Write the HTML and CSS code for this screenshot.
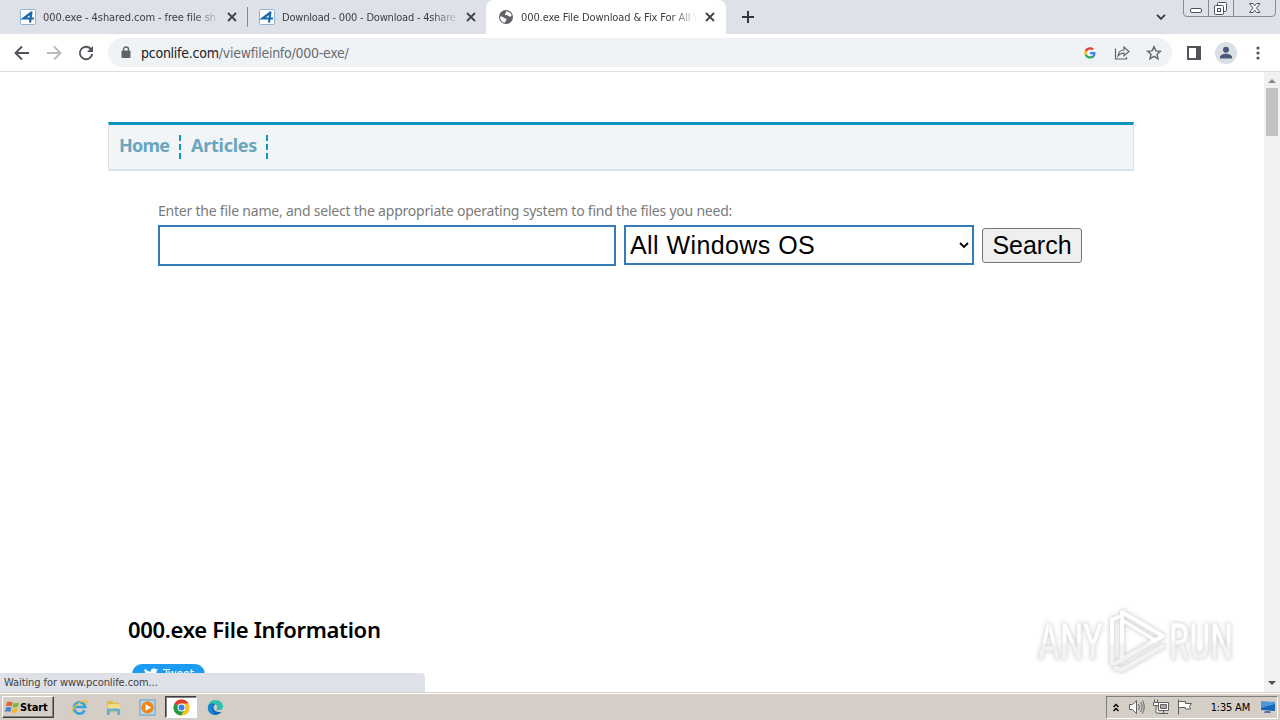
FILE: index.html
```html
<!DOCTYPE html>
<html lang="en">
<head>
  <meta charset="UTF-8" />
  <title>000.exe File Download &amp; Fix For All Windows OS</title>
  <link rel="stylesheet" href="styles.css">
</head>
<body>

  <!-- tabs -->
  <div class="tab-strip">
    <div class="tab first">
      <svg class="favicon" viewBox="0 0 16 16"><rect x=".5" y=".5" width="15" height="15" rx="1" fill="#fff" stroke="#8fb4d0"/><path d="M11.500 2.500L10 13.500M11.500 3.500L3.500 9.500H14" fill="none" stroke="#1c68ac" stroke-width="2.200"/></svg>
      <span class="tab-title t1">000.exe - 4shared.com - free file sh</span>
      <svg class="close" viewBox="0 0 10 10"><path d="M1 1l8 8M9 1L1 9"/></svg>
    </div>
    <div class="tab second">
      <svg class="favicon" viewBox="0 0 16 16"><rect x=".5" y=".5" width="15" height="15" rx="1" fill="#fff" stroke="#8fb4d0"/><path d="M11.500 2.500L10 13.500M11.500 3.500L3.500 9.500H14" fill="none" stroke="#1c68ac" stroke-width="2.200"/></svg>
      <span class="tab-title t2">Download - 000 - Download - 4share</span>
      <svg class="close" viewBox="0 0 10 10"><path d="M1 1l8 8M9 1L1 9"/></svg>
    </div>
    <div class="tab active">
      <svg class="favicon" viewBox="0 0 16 16"><circle cx="8" cy="8" r="7" fill="#5f6368"/><path d="M2 7.500c2 0 3 .3 4 1.300s2.500.2 2.500 1.600-1.500 1.200-1.500 3.400c-3-.3-5-3-5-6.300zM8 2.300c3 0 5.200 2 5.700 4.500-1.300 1.500-2.700.8-3.500 0S7 7 7 5.300 9 4 8 2.300z" fill="#fff"/></svg>
      <span class="tab-title t3">000.exe File Download &amp; Fix For All \</span>
      <svg class="close" viewBox="0 0 10 10"><path d="M1 1l8 8M9 1L1 9"/></svg>
    </div>
    <svg class="new-tab" viewBox="0 0 12 12"><path d="M6 0v12M0 6h12"/></svg>
    <svg class="tab-search" viewBox="0 0 10 6"><path d="M1 .8l4 4 4-4"/></svg>
    <div class="window-buttons">
      <svg viewBox="0 0 93 18" fill="none" stroke="#4d5261">
        <path d="M.5 0v13q0 3.500 3.500 3.500h85q3.500 0 3.500-3.500V0M25.500 0v16.500M50.500 0v16.500" stroke="#868a97"/>
        <rect x="7.500" y="8.500" width="11" height="4" rx="1.500" fill="#fff"/>
        <rect x="34.500" y="2.500" width="9" height="9" rx="1" fill="#fff"/><rect x="31.500" y="5.500" width="9" height="9" rx="1" fill="#fff"/><rect x="34.500" y="8.500" width="3" height="3"/>
        <path d="M66.500 3.500h3.500l1.700 2.300L73.500 3.500H77L73.500 8 77 12.500h-3.500l-1.800-2.300-1.700 2.300h-3.500L70 8z" fill="#fff"/>
      </svg>
    </div>
  </div>

  <!-- toolbar -->
  <div class="toolbar">
    <svg class="nav-icon back" viewBox="0 0 16 16"><path d="M15 8H2M8 1.500L1.500 8 8 14.500"/></svg>
    <svg class="nav-icon forward" viewBox="0 0 16 16"><path d="M1 8h13M8 1.500L14.500 8 8 14.500"/></svg>
    <svg class="nav-icon reload" viewBox="0 0 16 16"><path d="M13.200 4.500A6.200 6.200 0 1 0 14.200 9"/><path d="M15 1v6H9z" fill="#50545a" stroke="none"/></svg>
    <div class="address">
      <svg class="lock" viewBox="0 0 10 13"><path d="M2.500 5V3.500a2.500 2.500 0 0 1 5 0V5" fill="none" stroke="#5f6368" stroke-width="1.400"/><rect x=".5" y="4.500" width="9" height="7.500" rx="1" fill="#5f6368"/></svg>
      <span class="url"><b>pconlife.com</b>/viewfileinfo/000-exe/</span>
      <svg class="google" viewBox="0 0 48 48"><path fill="#4285f4" d="M46 24.500c0-1.600-.1-3-.4-4.500H24v9h12.400c-.5 3-2.200 5.200-4.700 6.800v5.900h7.500C43.600 37.600 46 31.600 46 24.500z"/><path fill="#34a853" d="M24 46c6.200 0 11.400-2 15.200-5.500l-7.500-5.800c-2 1.400-4.700 2.200-7.700 2.200-6 0-11-4-12.800-9.400H3.500v6C7.300 41 15 46 24 46z"/><path fill="#fbbc05" d="M11.200 27.500c-1-2.700-1-6 0-8.500V13H3.500c-3.300 6.600-3.300 14 0 20.500z"/><path fill="#ea4335" d="M24 9.600c3.300 0 6.300 1.200 8.700 3.400l6.600-6.600C35.200 2.500 29.900.5 24 .5 15 .5 7.300 5.500 3.500 13l7.700 6C13 13.600 18 9.600 24 9.600z"/></svg>
      <svg class="share" viewBox="0 0 16 16"><path d="M1.500 3.500v10.500h11V12M4 11c.5-4 3-6 6-6V2l5 4.500-5 4.300V8C7.500 8 5.500 9 4 11z"/></svg>
      <svg class="star" viewBox="0 0 16 16"><path d="M8 1.700l1.900 4.200 4.500.4-3.400 3 1 4.500L8 11.400l-4 2.400 1-4.500-3.400-3 4.500-.4z"/></svg>
    </div>
    <svg class="panel" viewBox="0 0 14 14"><path d="M1 1h12v12H1z" fill="none" stroke="#50545a" stroke-width="2"/><path d="M9 1h4v12H9z" fill="#50545a"/></svg>
    <svg class="avatar" viewBox="0 0 22 22"><circle cx="11" cy="11" r="11" fill="#dadee5"/><circle cx="11" cy="7.800" r="3" fill="#4c5878"/><path d="M5 16.500v-1.500c0-2 3-3.300 6-3.300s6 1.300 6 3.300v1.500z" fill="#4c5878"/></svg>
    <svg class="more" viewBox="0 0 4 14"><circle cx="2" cy="2" r="1.600"/><circle cx="2" cy="7" r="1.600"/><circle cx="2" cy="12" r="1.600"/></svg>
  </div>

  <!-- web page -->
  <div class="viewport">
    <div class="page">
      <nav class="menu">
        <a class="home">Home</a>
        <a class="articles">Articles</a>
      </nav>

      <form class="search">
        <label for="fileName"><span class="hint">Enter the file name, and select the appropriate operating system to find the files you need:</span></label>
        <div class="search-row">
          <input type="text" id="fileName" />
          <div class="os-select">
            <span>All Windows OS</span>
            <svg viewBox="0 0 10 6"><path d="M1 1l4 4 4-4"/></svg>
          </div>
          <button type="button"><span>Search</span></button>
        </div>
      </form>

      <h1><span class="heading">000.exe File Information</span></h1>

      <a class="tweet">
        <svg viewBox="0 0 24 20"><path fill="#fff" d="M24 2.400a10 10 0 0 1-2.800.8A5 5 0 0 0 23.300.500a10 10 0 0 1-3.100 1.200A5 5 0 0 0 11.800 6.200 14 14 0 0 1 1.700 1a5 5 0 0 0 1.500 6.600A5 5 0 0 1 1 7a5 5 0 0 0 4 4.800 5 5 0 0 1-2.200.1 5 5 0 0 0 4.600 3.400A10 10 0 0 1 0 17.300a14 14 0 0 0 21.500-12.400A10 10 0 0 0 24 2.400z"/></svg>
        <span>Tweet</span>
      </a>
    </div>

    <div class="scrollbar">
      <svg class="up" viewBox="0 0 8 4"><path d="M0 4l4-4 4 4z" fill="#8a8a8a"/></svg>
      <div class="thumb"></div>
      <svg class="down" viewBox="0 0 8 4"><path d="M0 0l4 4 4-4z" fill="#505050"/></svg>
    </div>

    <div class="status">Waiting for www.pconlife.com...</div>

    <svg class="watermark" viewBox="0 0 210 70">
      <defs>
        <linearGradient id="fade" gradientUnits="userSpaceOnUse" x1="0" y1="0" x2="0" y2="70">
          <stop offset=".48" stop-color="#fff"/>
          <stop offset=".52" stop-color="#f3f3f3"/>
        </linearGradient>
      </defs>
      <g fill="url(#fade)" stroke="#e6e6e6" stroke-width=".5">
        <text x="7" y="51" textLength="65" lengthAdjust="spacingAndGlyphs">ANY</text>
        <text x="138" y="51" textLength="64" lengthAdjust="spacingAndGlyphs">RUN</text>
      </g>
      <g fill="none" stroke-linejoin="round" stroke-linecap="round">
        <path d="M91 53V4l41 24-47 27M81 11v45M83 11l4-2M84 60l7 2 41-24" stroke="#e2e2e2" stroke-width="5"/>
        <path d="M91 12l34 21" stroke="#e2e2e2" stroke-width="4"/>
        <path d="M91 53V4l41 24-47 27M81 11v45M83 11l4-2M84 60l7 2 41-24" stroke="url(#fade)" stroke-width="4"/>
        <path d="M91 12l34 21" stroke="url(#fade)" stroke-width="3"/>
      </g>
    </svg>
  </div>

  <!-- taskbar -->
  <div class="taskbar">
    <div class="start">
      <svg viewBox="0 0 16 16"><path d="M2 3q3-2 6 0L7 7.500q-3-1.500-6 0z" fill="#e8602c"/><path d="M9 3.400q3 1.500 6-.4l-1.200 4.500q-3 1.800-5.800.4z" fill="#7cb342"/><path d="M1 8.800q3-1.800 5.800 0l-1.100 4.500q-3-1.500-5.700 0z" fill="#3c84d8"/><path d="M7.800 9.200q3 1.400 5.800-.3l-1.200 4.500q-3 1.600-5.700.3z" fill="#f4b829"/></svg>
      <span>Start</span>
    </div>
    <div class="task">
      <svg viewBox="0 0 18 18"><path d="M14.500 12A6 6 0 1 1 15 8.500H4.500" fill="none" stroke="#36a4df" stroke-width="2.800"/><path d="M1.500 15.500C-1 11 11 0 16.500 2c1 .5.500 2.500-.3 3.500" fill="none" stroke="#efbd38" stroke-width="1.300"/></svg>
    </div>
    <div class="task">
      <svg viewBox="0 0 18 18"><path d="M2 4l1-2h5l1 2h6v10H2z" fill="#e0ba50"/><path d="M3 5.500h12.500V13H3z" fill="#f6df85"/><path d="M2 17v-5q0-2 2-2h10q2 0 2 2v5h-3v-4H5v4z" fill="#62aed6"/></svg>
    </div>
    <div class="task">
      <svg viewBox="0 0 18 18"><rect x="1" y="1" width="16" height="16" fill="#b9d6ee" stroke="#629cc8"/><circle cx="9" cy="9" r="6.500" fill="#f18618"/><path d="M7 5.500v7L13 9z" fill="#fff"/></svg>
    </div>
    <div class="task current">
      <svg viewBox="0 0 18 18"><circle cx="9" cy="9" r="8.500" fill="#fbc116"/><path d="M9 9L1.600 4.800A8.500 8.500 0 0 1 16.400 4.800H9z" fill="#e33b2e"/><path d="M9 9L1.600 4.800A8.500 8.500 0 0 0 8.500 17.500l3.500-6z" fill="#229a4c"/><circle cx="9" cy="9" r="4.200" fill="#fff"/><circle cx="9" cy="9" r="3.200" fill="#3b7ded"/></svg>
    </div>
    <div class="task">
      <svg viewBox="0 0 18 18"><path d="M1 8C2 2.500 5.500 1 9 1c5 0 8 3.500 8 7 0 3-2 4-4.500 4S9.500 11 10.500 9.500 10 5.500 7 5.500 2 7 1 8z" fill="#30c0b3"/><path d="M1 8c1.500-3 5-4 7.500-2.500C5 9 7.500 15 15.500 13.500 12 18.500 2 19 1 8z" fill="#0f67b5"/><path d="M1 8c1.500-2.500 4-3.300 6-3C4.500 7 4.500 13 9.500 16.900 4 17.500 0 13 1 8z" fill="#1686d2"/></svg>
    </div>
    <div class="tray">
      <svg class="chevrons" viewBox="0 0 6 9"><path d="M.5 4L3 1.500 5.500 4M.5 8L3 5.500 5.500 8"/></svg>
      <svg class="tray-icon" viewBox="0 0 16 16"><path d="M.5 5.500h3l4-4v13l-4-4h-3z" fill="#fff"/><path d="M9.500 5q2 3 0 6M11.500 3q3.300 5 0 10M13.500 1.500q3.500 6.500 0 13" fill="none"/></svg>
      <svg class="tray-icon net" viewBox="0 0 16 16"><path d="M5.500 3.500h10v8h-10z" fill="#fff"/><path d="M7.500 5.500h6v4h-6z" fill="#aaa"/><path d="M6 14.500h9M10.500 11.500v3M1.500.5v3M4.500.5v3M.5 3.500h5v3h-5zM3 7v7h3" fill="#fff"/></svg>
      <svg class="tray-icon flag" viewBox="0 0 16 16"><path d="M1.500.5v15M1.500 2.500h7v2h6l-2 3 1 2.500h-5v-1.500h-7z" fill="#fff"/></svg>
      <span class="clock">1:35 AM</span>
      <svg class="desktop" viewBox="0 0 16 14"><path d="M1 1.500L15 2v9L1 10z" fill="#1766bb"/><path d="M1 1.500L15 2v2L1 8z" fill="#4d98dd"/><path d="M5 11h5l1 2H4z" fill="#5d7595"/></svg>
    </div>
  </div>

</body>
</html>
```
FILE: styles.css
```css
:root {
  --ui: "DejaVu Sans Condensed", "DejaVu Sans", sans-serif;
  --strip: #dee1e8;
  --icon: #50545a;
  --blue: #337ab7;
  --teal: #0e94bd;
}

* { box-sizing: border-box; }

body {
  margin: 0;
  width: 1280px;
  height: 720px;
  overflow: hidden;
  display: flex;
  flex-direction: column;
  background: #fff;
  font-family: "Open Sans", sans-serif;
}

svg { display: block; flex: none; }

span { white-space: nowrap; }

/* tabs */
.tab-strip {
  height: 34px;
  flex: none;
  display: flex;
  background: var(--strip);
  font-family: var(--ui);
  font-size: 11px;
  color: #3c4043;
}

.tab {
  display: flex;
  align-items: center;
  height: 34px;
  padding-right: 10px;
}

.tab.first { width: 247px; padding-left: 20px; }
.tab.second { width: 239px; padding-left: 12px; }

.tab.second::before {
  content: "";
  width: 1px;
  height: 20px;
  margin: 0 0 0 -12px;
  background: #85888e;
}

.tab.second .favicon { margin-left: 11px; }

.tab.active {
  width: 240px;
  padding-left: 12px;
  padding-right: 11px;
  background: #fff;
  border-radius: 8px 8px 0 0;
}

.favicon { width: 16px; height: 16px; margin-right: 7px; }

.tab-title {
  width: 178px;
  -webkit-mask-image: linear-gradient(to right, #000 150px, transparent 178px);
  mask-image: linear-gradient(to right, #000 150px, transparent 178px);
}

.t1 { letter-spacing: -0.08px; }
.t2 { letter-spacing: -0.2px; }
.t3 { letter-spacing: -0.1px; }

.close {
  width: 10px;
  height: 10px;
  margin-left: auto;
  fill: none;
  stroke: #3f4348;
  stroke-width: 1.8;
}

.new-tab {
  width: 12px;
  height: 12px;
  margin: 11px 0 0 16px;
  stroke: #33373c;
  stroke-width: 2;
}

.tab-search {
  width: 10px;
  height: 6px;
  margin: 14px 17px 0 auto;
  fill: none;
  stroke: #33373c;
  stroke-width: 1.8;
}

.window-buttons svg { width: 93px; height: 18px; }
.window-buttons { margin-right: 4px; }

/* toolbar */
.toolbar {
  height: 38px;
  flex: none;
  display: flex;
  align-items: center;
  padding-left: 14px;
  border-bottom: 1px solid #dadce0;
}

.nav-icon {
  width: 16px;
  height: 16px;
  margin-right: 16px;
  fill: none;
  stroke: var(--icon);
  stroke-width: 1.9;
}

.forward { stroke: #b9bbbe; }
.reload { margin-right: 14px; }

.address {
  width: 1064px;
  height: 29px;
  display: flex;
  align-items: center;
  padding: 0 10px 0 13px;
  border-radius: 15px;
  background: #f0f3f5;
}

.lock { width: 10px; height: 13px; margin-right: 10px; }

.url {
  font-family: var(--ui);
  font-size: 14px;
  letter-spacing: -0.25px;
  color: #686c72;
}

.url b { font-weight: normal; color: #202124; }

.google { width: 12px; height: 12px; margin-left: auto; }

.share, .star {
  width: 16px;
  height: 16px;
  margin-left: 18px;
  fill: none;
  stroke: #5f6368;
  stroke-width: 1.2;
}

.star { margin-left: 16px; stroke-width: 1.4; }

.panel { width: 14px; height: 14px; margin-left: 15px; }
.avatar { width: 22px; height: 22px; margin-left: 14px; }
.more { width: 4px; height: 14px; margin-left: 19px; fill: var(--icon); }

/* page */
.viewport {
  position: relative;
  height: 620px;
  flex: none;
  display: flex;
  overflow: hidden;
}

.page { width: 1264px; padding: 50px 130px 0 108px; }

.menu {
  height: 49px;
  display: flex;
  padding: 10px 0 0 10px;
  background: #f1f5f8;
  border: 1px solid #d9e2e8;
  border-top: 3px solid var(--teal);
  border-bottom-width: 2px;
}

.menu a {
  height: 24px;
  line-height: 21px;
  margin-right: 10px;
  border-right: 2px dashed var(--teal);
  font-family: "Noto Sans", sans-serif;
  font-size: 18px;
  font-weight: bold;
  color: #6ba5bd;
}

.home { width: 62px; letter-spacing: -0.8px; }
.articles { width: 77px; letter-spacing: -0.25px; }

.search { margin: 30px 0 0 50px; }

.search label {
  display: block;
  height: 24px;
  line-height: 20px;
  font-family: "Noto Sans", sans-serif;
  font-size: 14px;
  color: #7b7b7b;
}

.hint { letter-spacing: -0.22px; }

.search-row { display: flex; gap: 8px; }

.search input {
  width: 458px;
  height: 41px;
  border: 2px solid var(--blue);
}

.os-select {
  width: 350px;
  height: 40px;
  display: flex;
  align-items: center;
  justify-content: space-between;
  padding: 0 3px 0 4px;
  border: 2px solid var(--blue);
  font: 25px "Liberation Sans", sans-serif;
}

.os-select span { letter-spacing: 0.42px; }

.os-select svg { width: 10px; height: 6px; fill: none; stroke: #000; stroke-width: 1.8; }

.search button {
  width: 100px;
  height: 35px;
  margin-top: 3px;
  padding: 0;
  border: 1px solid #767676;
  border-radius: 3px;
  background: #efefef;
  color: #000;
  font: 25px "Liberation Sans", sans-serif;
}

h1 {
  margin: 347px 0 0 20px;
  height: 51px;
  line-height: 32px;
  font-family: "Noto Sans", sans-serif;
  font-size: 22px;
  font-weight: 600;
  color: #000;
}

.heading { letter-spacing: -0.3px; }

.tweet {
  display: flex;
  width: 73px;
  height: 20px;
  margin-left: 24px;
  padding: 0 11px 0 12px;
  align-items: center;
  justify-content: space-between;
  border-radius: 10px;
  background: #1d9bf0;
  color: #fff;
  font: 12px var(--ui);
}

.tweet svg { width: 14px; height: 12px; }

.scrollbar {
  width: 16px;
  height: 620px;
  display: flex;
  flex-direction: column;
  align-items: center;
  background: #f1f1f1;
}

.scrollbar svg { width: 8px; height: 4px; }
.up { margin-top: 7px; }
.down { margin: auto 0 7px; }
.thumb { width: 12px; height: 48px; margin-top: 5px; background: #c1c1c1; }

.status {
  position: absolute;
  left: 0;
  bottom: 0;
  width: 425px;
  height: 19px;
  padding-left: 4px;
  line-height: 20px;
  border-radius: 0 4px 0 0;
  background: var(--strip);
  color: #3f4245;
  font-family: var(--ui);
  font-size: 11px;
  letter-spacing: -0.08px;
}

.watermark {
  position: absolute;
  left: 1031px;
  top: 536px;
  width: 210px;
  height: 70px;
  font-family: Roboto, sans-serif;
  font-size: 50px;
  font-weight: 500;
  filter: drop-shadow(0 0 2px rgba(0, 0, 0, 0.2));
}

/* taskbar */
.taskbar {
  height: 28px;
  flex: none;
  display: flex;
  align-items: center;
  padding: 1px 2px 0;
  border-top: 1px solid #d4d0c8;
  box-shadow: inset 0 1px #fff;
  background: #d5cec6;
  font-family: var(--ui);
  font-size: 11px;
}

.start {
  width: 52px;
  height: 22px;
  display: flex;
  align-items: center;
  padding-left: 2px;
  border: 1px solid;
  border-color: #fff #404040 #404040 #fff;
  box-shadow: inset -1px -1px #808080;
  font-weight: bold;
}

.start svg { width: 15px; height: 16px; }
.start span { letter-spacing: -0.1px; }

.task {
  width: 32px;
  height: 22px;
  display: flex;
  align-items: center;
  justify-content: center;
  margin-right: 2px;
}

.task svg { width: 17px; height: 17px; }
.start + .task { margin-left: 9px; }

.task.current {
  border: 1px solid;
  border-color: #404040 #fff #fff #404040;
  box-shadow: inset 1px 1px #808080;
  background: #fff;
}

.tray {
  width: 172px;
  height: 23px;
  display: flex;
  align-items: center;
  margin-left: auto;
  padding: 0 1px 0 6px;
  border: 1px solid;
  border-color: #808080 #fff #fff #808080;
}

.chevrons { width: 6px; height: 9px; fill: none; stroke: #000; stroke-width: 1.4; }
.tray-icon { width: 16px; height: 16px; margin-left: 10px; stroke: #606060; }
.net { margin-left: 8px; }
.flag { margin-left: 8px; }
.clock { margin: 0 10px 0 auto; letter-spacing: -0.2px; }
.desktop { width: 16px; height: 14px; }
```
